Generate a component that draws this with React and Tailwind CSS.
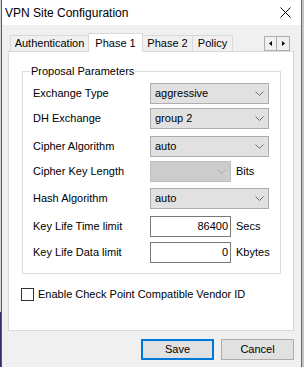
import React from 'react';

const font = "font-['Liberation_Sans',Arial,sans-serif]";

const Chevron = ({ color = '#6d6d6d' }) => (
    <svg width="9" height="5" viewBox="0 0 9 5">
        <path d="M0.5 0.5 L4.5 4.5 L8.5 0.5" fill="none" stroke={color} strokeWidth="1" />
    </svg>
);

const Combo = ({ value, disabled, width = 'w-[119px]' }) => (
    <div
        className={`${width} h-[21px] border flex items-center justify-between pl-[4px] pr-[4px] ${disabled
            ? 'bg-[#cccccc] border-[#bfbfbf]'
            : 'bg-[#e1e1e1] border-[#adadad]'}`}
    >
        <span>{value}</span>
        <Chevron color={disabled ? '#a8a8a8' : '#6d6d6d'} />
    </div>
);

const Field = ({ value }) => (
    <div className="w-[81px] h-[21px] border border-[#7a7a7a] bg-white flex items-center justify-end pr-[2px]">
        {value}
    </div>
);

const Row = ({ label, mt, children }) => (
    <div className={`flex items-center h-[21px] ${mt}`}>
        <div className="w-[127px] pl-[10px]">{label}</div>
        {children}
    </div>
);

const Tab = ({ label, width, active, className = '' }) => (
    <div
        className={`${width} flex items-center justify-center border-t border-[#d9d9d9] ${active
            ? 'h-[19px] -mb-[1px] bg-white relative z-10 border-l border-r'
            : 'h-[16px] bg-[#f0f0f0]'} ${className}`}
    >
        {label}
    </div>
);

export default function App() {
    return (
        <div className={`w-[304px] h-[367px] flex bg-[#cdcdcd] text-[11px] text-black overflow-hidden ${font}`}>
            {/* desktop edge on the left */}
            <div className="w-[1px] flex flex-col">
                <div className="h-[312px] bg-[#d8d8d8]" />
                <div className="flex-1 bg-[#3a2a6a]" />
            </div>
            <div className="w-[1px] bg-[#5a5a5a]" />

            {/* dialog */}
            <div className="w-[299px] flex flex-col bg-[#f0f0f0]">
                {/* Title bar */}
                <div className="h-[25px] bg-white flex items-center pl-[3px] pr-[10px]">
                    <span className="text-[12px]">VPN Site Configuration</span>
                    <svg className="ml-auto" width="11" height="11" viewBox="0 0 11 11">
                        <path d="M0.5 0.5 L10.5 10.5 M10.5 0.5 L0.5 10.5" stroke="#000" strokeWidth="1" />
                    </svg>
                </div>

                <div className="flex-1 pl-[6px] pr-[7px] pt-[8px]">
                    {/* Tabs */}
                    <div className="h-[18px] flex items-end">
                        <Tab label="Authentication" width="w-[78px]" className="ml-[2px] border-l" />
                        <Tab label="Phase 1" width="w-[55px]" active />
                        <Tab label="Phase 2" width="w-[49px]" />
                        <Tab label="Policy" width="w-[41px]" className="border-l border-r" />
                        <div className="ml-auto mr-[4px] flex">
                            <div className="w-[13px] h-[15px] border border-[#adadad] bg-[#f0f0f0] flex items-center justify-center">
                                <svg width="3" height="5" viewBox="0 0 3 5"><path d="M3 0 L0 2.5 L3 5 Z" fill="#000" /></svg>
                            </div>
                            <div className="w-[13px] h-[15px] border border-l-0 border-[#adadad] bg-[#f0f0f0] flex items-center justify-center">
                                <svg width="3" height="5" viewBox="0 0 3 5"><path d="M0 0 L3 2.5 L0 5 Z" fill="#000" /></svg>
                            </div>
                        </div>
                    </div>

                    {/* Tab panel */}
                    <div className="h-[280px] border border-[#d9d9d9] bg-white">
                        <fieldset className="ml-[13px] mt-[13px] w-[259px] border border-[#dcdcdc] pb-[10px]">
                            <legend className="ml-[7px] px-[1px] leading-[13px]">Proposal Parameters</legend>
                            <Row label="Exchange Type" mt="mt-[5px]">
                                <Combo value="aggressive" />
                            </Row>
                            <Row label="DH Exchange" mt="mt-[4px]">
                                <Combo value="group 2" />
                            </Row>
                            <Row label="Cipher Algorithm" mt="mt-[7px]">
                                <Combo value="auto" />
                            </Row>
                            <Row label="Cipher Key Length" mt="mt-[4px]">
                                <Combo value="" disabled width="w-[81px]" />
                                <span className="ml-[5px]">Bits</span>
                            </Row>
                            <Row label="Hash Algorithm" mt="mt-[6px]">
                                <Combo value="auto" />
                            </Row>
                            <Row label="Key Life Time limit" mt="mt-[7px]">
                                <Field value="86400" />
                                <span className="ml-[5px]">Secs</span>
                            </Row>
                            <Row label="Key Life Data limit" mt="mt-[5px]">
                                <Field value="0" />
                                <span className="ml-[5px]">Kbytes</span>
                            </Row>
                        </fieldset>

                        <label className="ml-[12px] mt-[12px] flex items-center">
                            <span className="w-[13px] h-[13px] border border-[#333333] bg-white" />
                            <span className="ml-[4px]">Enable Check Point Compatible Vendor ID</span>
                        </label>
                    </div>

                    {/* Buttons */}
                    <div className="mt-[8px] flex justify-end gap-[7px]">
                        <button className="w-[73px] h-[21px] border-2 border-[#0078d7] bg-[#e1e1e1]">Save</button>
                        <button className="w-[73px] h-[21px] border border-[#adadad] bg-[#e1e1e1]">Cancel</button>
                    </div>
                </div>
            </div>

            {/* right edge */}
            <div className="w-[1px] bg-[#6a6a6a]" />
            <div className="flex-1 bg-[#c4c4c4]" />
        </div>
    );
}
